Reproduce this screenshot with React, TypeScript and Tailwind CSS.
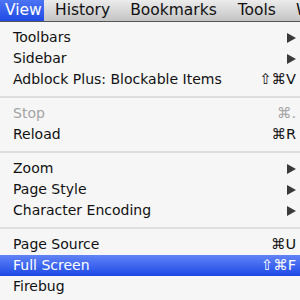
import React from "react";

const font = { fontFamily: '"DejaVu Sans", "Liberation Sans", sans-serif' };

function Arrow({ white }: { white?: boolean }) {
  return (
    <svg width="9" height="10" viewBox="0 0 9 10" className="shrink-0">
      <path d="M0 0 L9 5 L0 10 Z" fill={white ? "#fff" : "#3a3a3a"} />
    </svg>
  );
}

type Item = { label: string; shortcut?: string; sub?: boolean; disabled?: boolean; active?: boolean };

function Row({ label, shortcut, sub, disabled, active }: Item) {
  return (
    <div
      className={
        "flex items-center justify-between h-[21px] pl-[13px] pr-[4px] text-[14px] " +
        (active
          ? "bg-gradient-to-b from-[#6283f6] to-[#1c46e6] text-white"
          : disabled
          ? "text-[#a3a3a3]"
          : "text-[#111]")
      }
    >
      <span className="whitespace-nowrap">{label}</span>
      {sub ? <Arrow white={active} /> : shortcut ? <span className="whitespace-nowrap text-[14.5px]">{shortcut}</span> : null}
    </div>
  );
}

function Sep() {
  return (
    <div className="h-[13px] flex items-center">
      <div className="h-[2px] w-full bg-[#dedede]" />
    </div>
  );
}

export default function App() {
  return (
    <div className="w-[300px] h-[300px] overflow-hidden bg-[#f6f6f6] relative" style={font}>
      <div className="flex items-center h-[22px] bg-gradient-to-b from-[#ececec] to-[#c4c4c4] border-b border-[#555] text-[15.5px] text-[#111] whitespace-nowrap overflow-hidden">
        <div className="h-full flex items-center px-[5px] bg-gradient-to-b from-[#4c74f5] to-[#1f49e3] text-white w-[44px] shrink-0">View</div>
        <div className="pl-[11px] shrink-0">History</div>
        <div className="pl-[20px] shrink-0">Bookmarks</div>
        <div className="pl-[21px] shrink-0">Tools</div>
        <div className="pl-[20px] shrink-0">W</div>
      </div>
      <div className="pt-[5px]">
        <Row label="Toolbars" sub />
        <Row label="Sidebar" sub />
        <Row label="Adblock Plus: Blockable Items" shortcut="⇧⌘V" />
        <Sep />
        <Row label="Stop" shortcut="⌘." disabled />
        <Row label="Reload" shortcut="⌘R" />
        <Sep />
        <Row label="Zoom" sub />
        <Row label="Page Style" sub />
        <Row label="Character Encoding" sub />
        <Sep />
        <Row label="Page Source" shortcut="⌘U" />
        <Row label="Full Screen" shortcut="⇧⌘F" active />
        <Row label="Firebug" />
      </div>
    </div>
  );
}
